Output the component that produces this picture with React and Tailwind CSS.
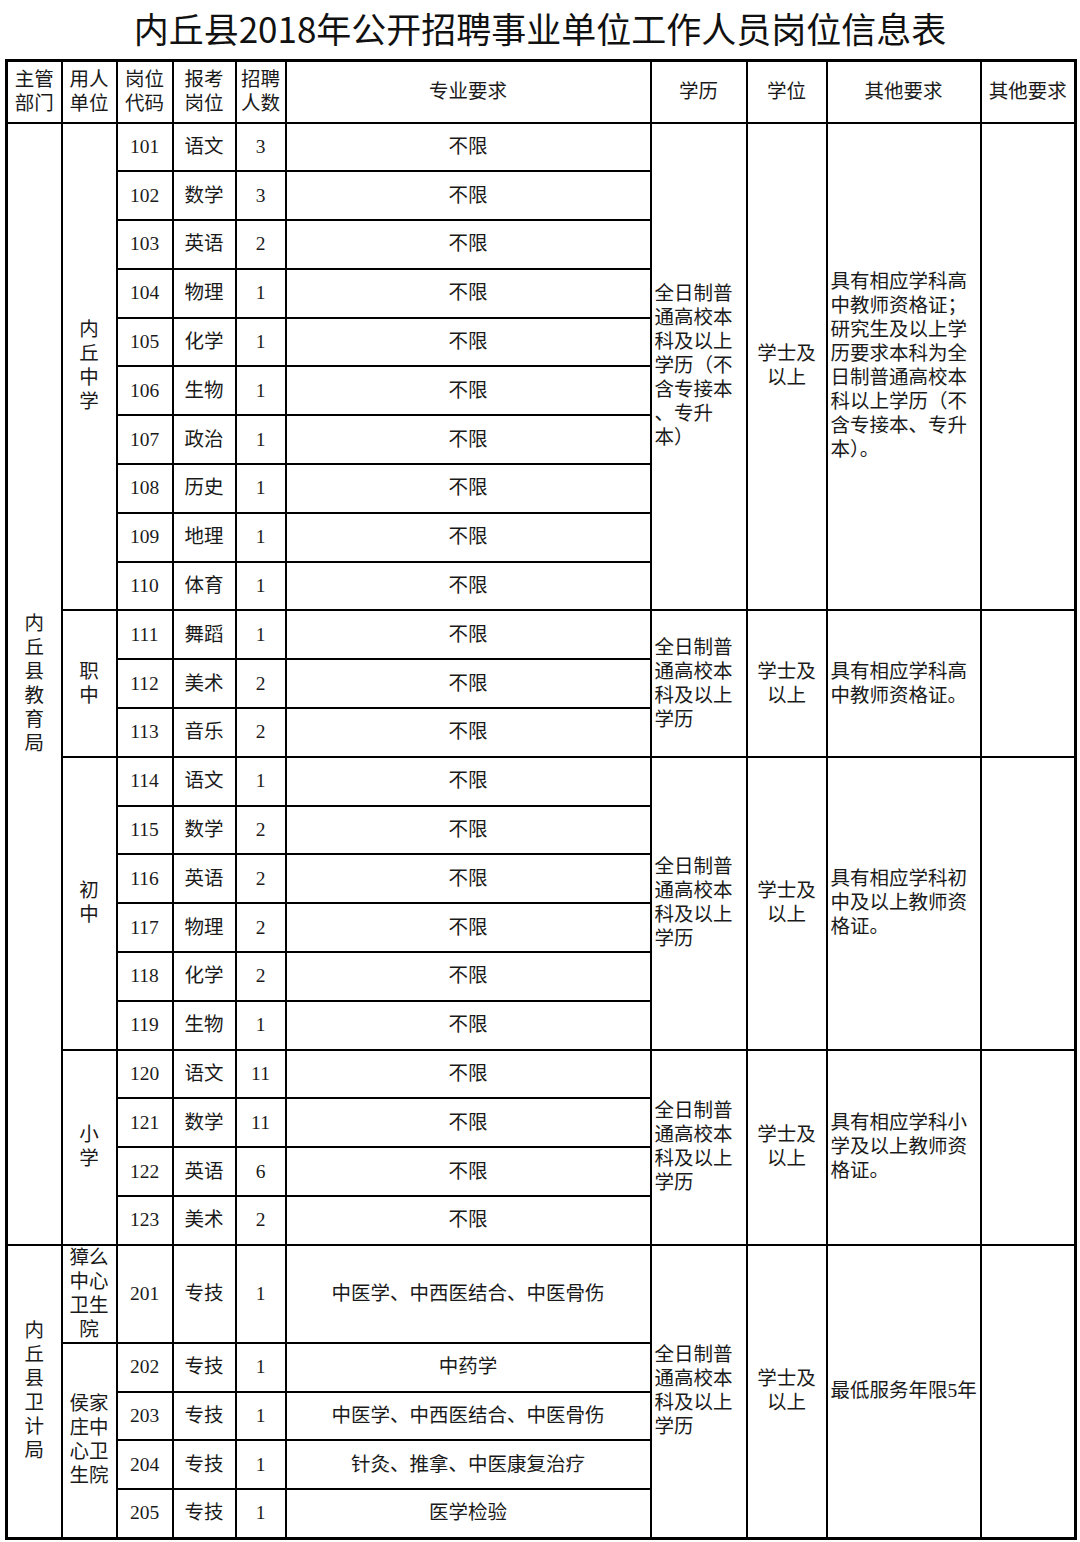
const EDU = ['全日制普', '通高校本', '科及以上', '学历'];
const EDU_LONG = ['全日制普', '通高校本', '科及以上', '学历（不', '含专接本', '、专升', '本）'];
const DEGREE = ['学士及', '以上'];

const blocks = [
  {
    unit: ['内', '丘', '中', '学'],
    rows: [
      ['101', '语文', '3'], ['102', '数学', '3'], ['103', '英语', '2'], ['104', '物理', '1'], ['105', '化学', '1'],
      ['106', '生物', '1'], ['107', '政治', '1'], ['108', '历史', '1'], ['109', '地理', '1'], ['110', '体育', '1'],
    ],
    edu: EDU_LONG,
    other: ['具有相应学科高', '中教师资格证；', '研究生及以上学', '历要求本科为全', '日制普通高校本', '科以上学历（不', '含专接本、专升', '本）。'],
  },
  {
    unit: ['职', '中'],
    rows: [['111', '舞蹈', '1'], ['112', '美术', '2'], ['113', '音乐', '2']],
    edu: EDU,
    other: ['具有相应学科高', '中教师资格证。'],
  },
  {
    unit: ['初', '中'],
    rows: [['114', '语文', '1'], ['115', '数学', '2'], ['116', '英语', '2'], ['117', '物理', '2'], ['118', '化学', '2'], ['119', '生物', '1']],
    edu: EDU,
    other: ['具有相应学科初', '中及以上教师资', '格证。'],
  },
  {
    unit: ['小', '学'],
    rows: [['120', '语文', '11'], ['121', '数学', '11'], ['122', '英语', '6'], ['123', '美术', '2']],
    edu: EDU,
    other: ['具有相应学科小', '学及以上教师资', '格证。'],
  },
];

const health = [
  ['201', '专技', '1', '中医学、中西医结合、中医骨伤'],
  ['202', '专技', '1', '中药学'],
  ['203', '专技', '1', '中医学、中西医结合、中医骨伤'],
  ['204', '专技', '1', '针灸、推拿、中医康复治疗'],
  ['205', '专技', '1', '医学检验'],
];

function Lines({ items }) {
  return items.map((t, i) => (
    <span key={i} className="block">{t}</span>
  ));
}

const cell = 'border-2 border-black p-0 align-middle';
const center = cell + ' text-center';
const left = cell + ' text-left pl-[3px]';

function CodeCells({ code, post, num, major }) {
  return (
    <>
      <td className={center}>{code}</td>
      <td className={center}>{post}</td>
      <td className={center}>{num}</td>
      <td className={center}>{major}</td>
    </>
  );
}

export default function App() {
  const eduTotal = blocks.reduce((n, b) => n + b.rows.length, 0);

  return (
    <div className="w-[1080px] h-[1542px] bg-white overflow-hidden">
      <h1
        className="h-[59px] flex items-center justify-center text-[35px] font-normal text-[#111] leading-none pb-[4px]"
        style={{ fontFamily: '"Noto Sans CJK SC", sans-serif' }}
      >
        内丘县2018年公开招聘事业单位工作人员岗位信息表
      </h1>
      <table
        className="ml-[5px] w-[1072px] table-fixed border-collapse border-[3px] border-black text-[19.5px] leading-[24px] text-[#1a1a1a]"
        style={{ fontFamily: '"Liberation Serif", "Noto Sans CJK SC", serif' }}
      >
        <colgroup>
          <col className="w-[55px]" />
          <col className="w-[55px]" />
          <col className="w-[56px]" />
          <col className="w-[63px]" />
          <col className="w-[50px]" />
          <col className="w-[365px]" />
          <col className="w-[96px]" />
          <col className="w-[80px]" />
          <col className="w-[154px]" />
          <col />
        </colgroup>
        <thead>
          <tr className="h-[62px]">
            <th className={center + ' font-normal'}><Lines items={['主管', '部门']} /></th>
            <th className={center + ' font-normal'}><Lines items={['用人', '单位']} /></th>
            <th className={center + ' font-normal'}><Lines items={['岗位', '代码']} /></th>
            <th className={center + ' font-normal'}><Lines items={['报考', '岗位']} /></th>
            <th className={center + ' font-normal'}><Lines items={['招聘', '人数']} /></th>
            <th className={center + ' font-normal'}>专业要求</th>
            <th className={center + ' font-normal'}>学历</th>
            <th className={center + ' font-normal'}>学位</th>
            <th className={center + ' font-normal'}>其他要求</th>
            <th className={center + ' font-normal'}>其他要求</th>
          </tr>
        </thead>
        <tbody>
          {blocks.map((b, bi) =>
            b.rows.map(([code, post, num], ri) => (
              <tr key={code} className="h-[48.8px]">
                {bi === 0 && ri === 0 && (
                  <td rowSpan={eduTotal} className={center}>
                    <Lines items={['内', '丘', '县', '教', '育', '局']} />
                  </td>
                )}
                {ri === 0 && (
                  <td rowSpan={b.rows.length} className={center}>
                    <Lines items={b.unit} />
                  </td>
                )}
                <CodeCells code={code} post={post} num={num} major="不限" />
                {ri === 0 && (
                  <>
                    <td rowSpan={b.rows.length} className={left}><Lines items={b.edu} /></td>
                    <td rowSpan={b.rows.length} className={center}><Lines items={DEGREE} /></td>
                    <td rowSpan={b.rows.length} className={left}><Lines items={b.other} /></td>
                    <td rowSpan={b.rows.length} className={cell}></td>
                  </>
                )}
              </tr>
            ))
          )}
          {health.map(([code, post, num, major], i) => (
            <tr key={code} className={i === 0 ? 'h-[97.6px]' : 'h-[48.8px]'}>
              {i === 0 && (
                <>
                  <td rowSpan={5} className={center}>
                    <Lines items={['内', '丘', '县', '卫', '计', '局']} />
                  </td>
                  <td className={center}>
                    <Lines items={['獐么', '中心', '卫生', '院']} />
                  </td>
                </>
              )}
              {i === 1 && (
                <td rowSpan={4} className={center}>
                  <Lines items={['侯家', '庄中', '心卫', '生院']} />
                </td>
              )}
              <CodeCells code={code} post={post} num={num} major={major} />
              {i === 0 && (
                <>
                  <td rowSpan={5} className={left}><Lines items={EDU} /></td>
                  <td rowSpan={5} className={center}><Lines items={DEGREE} /></td>
                  <td rowSpan={5} className={left}>最低服务年限5年</td>
                  <td rowSpan={5} className={cell}></td>
                </>
              )}
            </tr>
          ))}
        </tbody>
      </table>
    </div>
  );
}
